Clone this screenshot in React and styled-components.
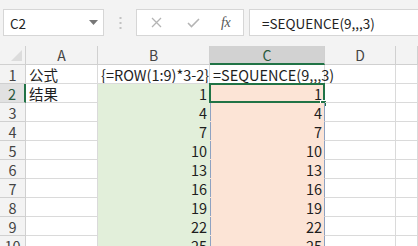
import React from "react";
import styled, { createGlobalStyle, css } from "styled-components";

const Global = createGlobalStyle`
  html, body { margin: 0; padding: 0; background: #ffffff; overflow: hidden; }
  body { width: 418px; height: 246px; }
  * { box-sizing: border-box; }
`;

const FONT = `"Noto Sans CJK SC", "Liberation Sans", sans-serif`;

const Page = styled.div`
  width: 418px;
  height: 246px;
  overflow: hidden;
  font-family: ${FONT};
  display: flex;
  flex-direction: column;
`;

const Toolbar = styled.div`
  height: 46px;
  flex: none;
  background: #f3f3f3;
  display: flex;
  align-items: flex-start;
  padding: 9px 0 0 3px;
`;

const NameBox = styled.div`
  width: 101px;
  height: 27px;
  background: #fff;
  border: 1px solid #d6d6d6;
  display: flex;
  align-items: center;
  justify-content: space-between;
  padding: 0 5px 0 6px;
  font-size: 13.5px;
  color: #222;
`;

const Dots = styled.div`
  width: 32px;
  height: 27px;
  display: flex;
  align-items: center;
  justify-content: center;
`;

const ButtonBox = styled.div`
  width: 108px;
  height: 27px;
  background: #fff;
  border: 1px solid #d6d6d6;
  display: flex;
  align-items: center;
  padding: 0 0 0 14px;
  gap: 0;
`;

const IconSlot = styled.div`
  width: ${(p) => p.$w}px;
  display: flex;
  align-items: center;
  justify-content: ${(p) => p.$justify || "flex-start"};
`;

const Fx = styled.span`
  font-family: "Liberation Serif", serif;
  font-style: italic;
  font-size: 14px;
  color: #555;
  letter-spacing: -0.5px;
`;

const FormulaBox = styled.div`
  flex: 1;
  height: 27px;
  margin-left: 5px;
  background: #fff;
  border: 1px solid #d6d6d6;
  border-right: none;
  display: flex;
  align-items: center;
  padding-left: 12px;
  font-size: 13.5px;
  color: #222;
`;

const Grid = styled.div`
  display: grid;
  grid-template-columns: 26px 72px 112px 115px 71px 1fr;
  grid-auto-rows: 19px;
  flex: none;
`;

const headerBase = css`
  background: #f3f3f3;
  border-right: 1px solid #d0d0d0;
  border-bottom: 1px solid #d0d0d0;
  color: #444;
  font-size: 14px;
  line-height: 18px;
  text-align: center;
`;

const Corner = styled.div`
  ${headerBase};
  position: relative;
  &::after {
    content: "";
    position: absolute;
    right: 3px;
    bottom: 3px;
    border-style: solid;
    border-width: 0 0 11px 11px;
    border-color: transparent transparent #dcdcdc transparent;
  }
`;

const ColHeader = styled.div`
  ${headerBase};
  ${(p) =>
    p.$active &&
    css`
      background: #d2d2d2;
      color: #2b5a3d;
      border-bottom: 2px solid #217346;
    `}
`;

const RowHeader = styled.div`
  ${headerBase};
  line-height: 19px;
  font-size: 14.5px;
  overflow: hidden;
  ${(p) =>
    p.$active &&
    css`
      background: #e1e1e1;
      color: #2b5a3d;
      border-right: 2px solid #217346;
    `}
`;

const fills = {
  green: "#e2efda",
  peach: "#fce4d6",
};

const Cell = styled.div`
  position: relative;
  border-right: 1px solid ${(p) => (p.$fill ? fills[p.$fill] : "#dadada")};
  border-bottom: 1px solid ${(p) => (p.$fill ? fills[p.$fill] : "#dadada")};
  background: ${(p) => (p.$fill ? fills[p.$fill] : "transparent")};
  font-size: 14.5px;
  line-height: 19px;
  color: #1e1e1e;
  white-space: nowrap;
  padding: 0 2px 0 3px;
  text-align: ${(p) => (p.$num ? "right" : "left")};
  overflow: ${(p) => (p.$clip ? "hidden" : "visible")};
  ${(p) =>
    p.$spill &&
    css`
      border-right: 1px solid #8ea2c2;
      box-shadow: inset 1px 0 0 #8ea2c2;
    `}
`;

const Selection = styled.div`
  position: absolute;
  left: -1px;
  top: -1px;
  width: 116px;
  height: 20px;
  border: 2px solid #217346;
  pointer-events: none;
`;

const FillHandle = styled.div`
  position: absolute;
  left: 110px;
  top: 16px;
  width: 7px;
  height: 7px;
  background: #217346;
  border: 1px solid #fff;
`;

const values = [1, 4, 7, 10, 13, 16, 19, 22, 25];

export default function App() {
  const rows = [];
  // row 1
  rows.push(
    <React.Fragment key="r1">
      <RowHeader>1</RowHeader>
      <Cell>公式</Cell>
      <Cell $clip>{"{=ROW(1:9)*3-2}"}</Cell>
      <Cell>=SEQUENCE(9,,,3)</Cell>
      <Cell />
      <Cell />
    </React.Fragment>
  );
  values.forEach((v, i) => {
    const r = i + 2;
    rows.push(
      <React.Fragment key={"r" + r}>
        <RowHeader $active={r === 2}>{r}</RowHeader>
        <Cell>{r === 2 ? "结果" : ""}</Cell>
        <Cell $fill="green" $num>
          {v}
        </Cell>
        <Cell $fill="peach" $num $spill>
          {v}
          {r === 2 && (
            <>
              <Selection />
              <FillHandle />
            </>
          )}
        </Cell>
        <Cell />
        <Cell />
      </React.Fragment>
    );
  });

  return (
    <Page>
      <Global />
      <Toolbar>
        <NameBox>
          <span>C2</span>
          <svg width="9" height="5" viewBox="0 0 9 5">
            <path d="M0 0 L9 0 L4.5 5 Z" fill="#777" />
          </svg>
        </NameBox>
        <Dots>
          <svg width="3" height="12" viewBox="0 0 3 12">
            <rect x="0.5" y="0" width="2" height="2" fill="#c2c2c2" />
            <rect x="0.5" y="5" width="2" height="2" fill="#c2c2c2" />
            <rect x="0.5" y="10" width="2" height="2" fill="#c2c2c2" />
          </svg>
        </Dots>
        <ButtonBox>
          <IconSlot $w={36}>
            <svg width="11" height="11" viewBox="0 0 11 11">
              <path d="M1 1 L10 10 M10 1 L1 10" stroke="#b4b4b4" strokeWidth="1.3" fill="none" />
            </svg>
          </IconSlot>
          <IconSlot $w={34}>
            <svg width="13" height="10" viewBox="0 0 13 10">
              <path d="M1 5 L4.5 8.6 L12 1" stroke="#b4b4b4" strokeWidth="1.5" fill="none" />
            </svg>
          </IconSlot>
          <IconSlot $w={20}>
            <Fx>fx</Fx>
          </IconSlot>
        </ButtonBox>
        <FormulaBox>=SEQUENCE(9,,,3)</FormulaBox>
      </Toolbar>
      <Grid>
        <Corner />
        <ColHeader>A</ColHeader>
        <ColHeader>B</ColHeader>
        <ColHeader $active>C</ColHeader>
        <ColHeader>D</ColHeader>
        <ColHeader />
        {rows}
      </Grid>
    </Page>
  );
}
